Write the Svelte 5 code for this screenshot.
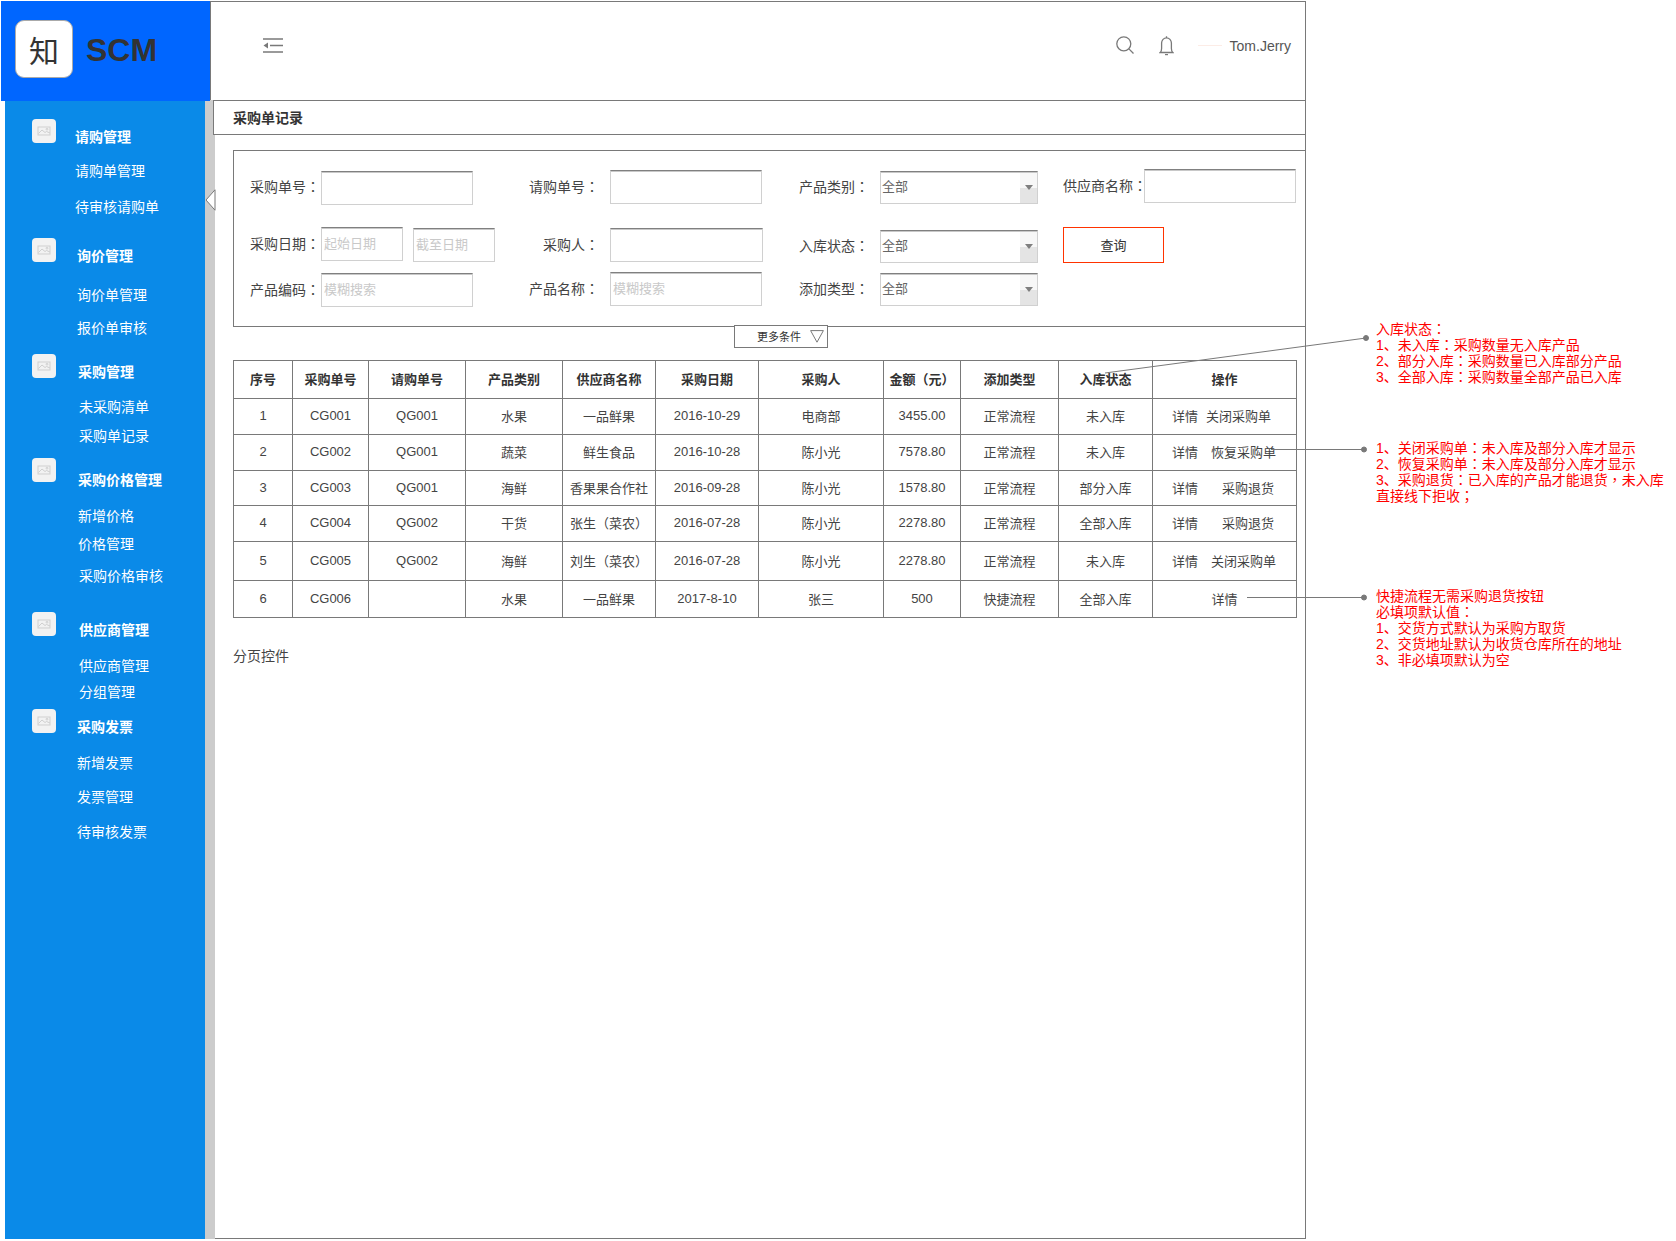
<script lang="ts">
  // sidebar rows: y is the centre of the text in page coords, lift is how far the icon top sits above it
  const menu = [
    { label: '请购管理', y: 137, x: 75, head: true, lift: 18 },
    { label: '请购单管理', y: 171, x: 75 },
    { label: '待审核请购单', y: 207, x: 75 },
    { label: '询价管理', y: 256, x: 77, head: true, lift: 18 },
    { label: '询价单管理', y: 295, x: 77 },
    { label: '报价单审核', y: 328, x: 77 },
    { label: '采购管理', y: 372, x: 78, head: true, lift: 18 },
    { label: '未采购清单', y: 407, x: 79 },
    { label: '采购单记录', y: 436, x: 79 },
    { label: '采购价格管理', y: 480, x: 78, head: true, lift: 22 },
    { label: '新增价格', y: 516, x: 78 },
    { label: '价格管理', y: 544, x: 78 },
    { label: '采购价格审核', y: 576, x: 79 },
    { label: '供应商管理', y: 630, x: 79, head: true, lift: 18 },
    { label: '供应商管理', y: 666, x: 79 },
    { label: '分组管理', y: 692, x: 79 },
    { label: '采购发票', y: 727, x: 77, head: true, lift: 18 },
    { label: '新增发票', y: 763, x: 77 },
    { label: '发票管理', y: 797, x: 77 },
    { label: '待审核发票', y: 832, x: 77 },
  ];
  const rowH = 20;
  const menuRows = menu.map((m, i) => ({
    ...m,
    gap: i === 0 ? m.y - rowH / 2 - 100 : m.y - menu[i - 1].y - rowH,
  }));

  const colWidths = [59, 76, 97, 97, 93, 103, 125, 77, 98, 94, 144];
  const headers = ['序号', '采购单号', '请购单号', '产品类别', '供应商名称', '采购日期', '采购人', '金额（元）', '添加类型', '入库状态', '操作'];
  const rows = [
    { h: 36, c: ['1', 'CG001', 'QG001', '水果', '一品鲜果', '2016-10-29', '电商部', '3455.00', '正常流程', '未入库'], op: '关闭采购单', gap: 8 },
    { h: 36, c: ['2', 'CG002', 'QG001', '蔬菜', '鲜生食品', '2016-10-28', '陈小光', '7578.80', '正常流程', '未入库'], op: '恢复采购单', gap: 13 },
    { h: 35, c: ['3', 'CG003', 'QG001', '海鲜', '香果果合作社', '2016-09-28', '陈小光', '1578.80', '正常流程', '部分入库'], op: '采购退货', gap: 24 },
    { h: 36, c: ['4', 'CG004', 'QG002', '干货', '张生（菜农）', '2016-07-28', '陈小光', '2278.80', '正常流程', '全部入库'], op: '采购退货', gap: 24 },
    { h: 39, c: ['5', 'CG005', 'QG002', '海鲜', '刘生（菜农）', '2016-07-28', '陈小光', '2278.80', '正常流程', '未入库'], op: '关闭采购单', gap: 13 },
    { h: 37, c: ['6', 'CG006', '', '水果', '一品鲜果', '2017-8-10', '张三', '500', '快捷流程', '全部入库'], op: '', gap: 0 },
  ];

  const notes = [
    { y: 321, lines: ['入库状态：', '1、未入库：采购数量无入库产品', '2、部分入库：采购数量已入库部分产品', '3、全部入库：采购数量全部产品已入库'] },
    { y: 440, lines: ['1、关闭采购单：未入库及部分入库才显示', '2、恢复采购单：未入库及部分入库才显示', '3、采购退货：已入库的产品才能退货，未入库', '直接线下拒收；'] },
    { y: 588, lines: ['快捷流程无需采购退货按钮', '必填项默认值：', '1、交货方式默认为采购方取货', '2、交货地址默认为收货仓库所在的地址', '3、非必填项默认为空'] },
  ];

  const punct = /([：，；（）])/;
</script>

{#snippet txt(s)}
  {#each s.split(punct) as part}
    {#if punct.test(part)}<span class="punct">{part}</span>{:else}{part}{/if}
  {/each}
{/snippet}

{#snippet label(s, cls = '')}
  <span class="label {cls}">{@render txt(s)}</span>
{/snippet}

{#snippet dropdown(text)}
  <div class="select">
    <span>{text}</span>
    <div class="select-btn"><i></i></div>
  </div>
{/snippet}

<div class="page">
  <div class="top">
    <div class="brand">
      <div class="logo">知</div>
      <div class="brand-name">SCM</div>
    </div>
    <header class="topbar">
      <svg class="menu-toggle" width="20" height="15" viewBox="0 0 20 15" fill="none" stroke="#797979" stroke-width="1.6">
        <path d="M0 1h20M7 7.5h13M0 14h20" />
        <path d="M5 4.6v5.8L0.5 7.5z" fill="#797979" stroke="none" />
      </svg>
      <div class="spacer"></div>
      <svg width="18" height="18" viewBox="0 0 18 18" fill="none" stroke="#797979" stroke-width="1.3">
        <circle cx="7.8" cy="7.8" r="7" />
        <path d="M12.9 12.9l4.6 4.6" />
      </svg>
      <svg class="bell" width="15" height="21" viewBox="0 0 15 21" fill="none" stroke="#797979" stroke-width="1.3">
        <path d="M7.5 1.2v1.6M1.2 17.5c1-1 1.4-2 1.4-4V8a4.9 5.2 0 0 1 9.8 0v5.5c0 2 .4 3 1.4 4z" />
        <path d="M6 19h3v1.2H6z" fill="#797979" stroke="none" />
      </svg>
      <span class="avatar-line"></span>
      <span class="user">Tom.Jerry</span>
    </header>
  </div>

  <div class="body">
    <nav class="sidebar">
      {#each menuRows as m}
        <div class="menu-row" class:head={m.head} style:margin-top="{m.gap}px" style:padding-left="{m.x - 5}px">
          {#if m.head}
            <div class="menu-icon" style:top="{rowH / 2 - m.lift}px">
              <svg width="14" height="10" viewBox="0 0 14 10" fill="none" stroke="#cfcfcf">
                <rect x="1" y="1" width="12" height="8" />
                <path d="M1.5 7.5l3.5-3.5 3 2.5 1.5-1 3.5 1.5" />
                <circle cx="10" cy="3.2" r=".9" />
              </svg>
            </div>
          {/if}
          {m.label}
        </div>
      {/each}
    </nav>

    <div class="strip">
      <svg class="collapse" width="11" height="22" viewBox="0 0 11 22">
        <path d="M10 .8L1 11l9 10.2z" fill="#fff" stroke="#797979" />
      </svg>
    </div>

    <main class="content">
      <div class="title">采购单记录</div>

      <section class="filter">
        <div class="field dy1">
          {@render label('采购单号：', 'l1')}
          <input class="w152 nudge" />
        </div>
        <div class="field dy1">
          {@render label('请购单号：', 'l2')}
          <input class="w152" />
        </div>
        <div class="field dy1">
          {@render label('产品类别：', 'l2')}
          {@render dropdown('全部')}
        </div>
        <div class="field">
          {@render label('供应商名称：', 'l3')}
          <input class="w152" />
        </div>

        <div class="field">
          {@render label('采购日期：', 'l1')}
          <input class="w82" placeholder="起始日期" />
          <input class="w82 date-to" placeholder="截至日期" />
        </div>
        <div class="field dy1">
          {@render label('采购人：', 'l2')}
          <input class="w153" />
        </div>
        <div class="field dy2">
          {@render label('入库状态：', 'l2')}
          {@render dropdown('全部')}
        </div>
        <div class="field">
          <button class="query">查询</button>
        </div>

        <div class="field dy1">
          {@render label('产品编码：', 'l1')}
          <input class="w152" placeholder="模糊搜索" />
        </div>
        <div class="field">
          {@render label('产品名称：', 'l2')}
          <input class="w152" placeholder="模糊搜索" />
        </div>
        <div class="field">
          {@render label('添加类型：', 'l2')}
          {@render dropdown('全部')}
        </div>
      </section>

      <div class="more">
        <span>更多条件</span>
        <svg width="14" height="13" viewBox="0 0 14 13" fill="none" stroke="#797979">
          <path d="M.6.6h12.8L7 12.2z" />
        </svg>
      </div>

      <table>
        <colgroup>
          {#each colWidths as w}<col style:width="{w}px" />{/each}
        </colgroup>
        <thead>
          <tr>
            {#each headers as h}<th>{@render txt(h)}</th>{/each}
          </tr>
        </thead>
        <tbody>
          {#each rows as r}
            <tr style:height="{r.h}px">
              {#each r.c as v}<td>{@render txt(v)}</td>{/each}
              {#if r.op}
                <td class="ops"><span>详情</span><span style:margin-left="{r.gap}px">{r.op}</span></td>
              {:else}
                <td>详情</td>
              {/if}
            </tr>
          {/each}
        </tbody>
      </table>

      <div class="pager">分页控件</div>
    </main>
  </div>

  <!-- annotations sit on the canvas beside the wireframe -->
  <svg class="links" width="1676" height="1241" fill="#797979" stroke="#797979">
    <path d="M1105 373L1366 338M1271 449.5H1364M1247 597.5H1364" fill="none" />
    <circle cx="1366" cy="338" r="2.5" />
    <circle cx="1364" cy="449.5" r="2.5" />
    <circle cx="1364" cy="597.5" r="2.5" />
  </svg>
  {#each notes as n}
    <div class="note" style:top="{n.y}px">
      {#each n.lines as line}
        <div>{@render txt(line)}</div>
      {/each}
    </div>
  {/each}
</div>

<style>
  :global(body) {
    margin: 0;
    background: #fff;
  }

  .page {
    position: relative;
    width: 1676px;
    height: 1241px;
    padding-top: 1px;
    box-sizing: border-box;
    overflow: hidden;
    font-family: "Liberation Sans", "Noto Sans CJK SC", sans-serif;
    font-size: 14px;
    color: #333;
  }

  .punct {
    font-family: "Noto Sans CJK TC", sans-serif;
    line-height: 0;
  }

  .top {
    display: flex;
    align-items: flex-start;
    width: 1306px;
    height: 99px;
    padding-left: 1px;
    box-sizing: border-box;
  }

  .brand {
    position: relative;
    z-index: 1;
    display: flex;
    align-items: center;
    width: 209px;
    height: 100px;
    padding: 0 0 4px 14px;
    box-sizing: border-box;
    background: #0066ff;
  }

  .logo {
    display: flex;
    align-items: center;
    justify-content: center;
    width: 58px;
    height: 58px;
    box-sizing: border-box;
    background: #fff;
    border: 1px solid #aaa;
    border-radius: 9px;
    font-size: 30px;
    color: #333;
  }

  .brand-name {
    margin: 2px 0 0 13px;
    font-size: 32px;
    font-weight: 700;
    color: #333;
  }

  .topbar {
    flex: 1;
    display: flex;
    align-items: center;
    height: 99px;
    padding: 0 14px 12px 52px;
    box-sizing: border-box;
    border: 1px solid #797979;
    border-bottom: 0;
    background: #fff;
  }

  .spacer {
    flex: 1;
  }

  .bell {
    margin-left: 25px;
  }

  .avatar-line {
    width: 24px;
    height: 1px;
    margin-left: 24px;
    background: #fcece6;
  }

  .user {
    margin: 2px 0 0 8px;
    color: #555;
  }

  .body {
    display: flex;
    width: 1306px;
    height: 1139px;
  }

  .sidebar {
    width: 200px;
    margin-left: 5px;
    background: #0a8ae8;
    color: #fff;
    overflow: hidden;
    flex-shrink: 0;
  }

  .menu-row {
    position: relative;
    height: 20px;
    line-height: 20px;
    white-space: nowrap;
  }

  .menu-row.head {
    font-weight: 700;
  }

  .menu-icon {
    position: absolute;
    left: 27px;
    display: flex;
    align-items: center;
    justify-content: center;
    width: 24px;
    height: 24px;
    background: #f2f2f2;
    border-radius: 4px;
  }

  .strip {
    position: relative;
    width: 10px;
    background: #ccc;
    flex-shrink: 0;
  }

  .collapse {
    position: absolute;
    left: 0;
    top: 89px;
  }

  .content {
    flex: 1;
    min-width: 0;
    padding-left: 18px;
    background: #fff;
    border-right: 1px solid #797979;
    border-bottom: 1px solid #797979;
  }

  .title {
    position: relative;
    height: 33px;
    line-height: 34px;
    margin: 0 -1px 15px -20px;
    padding-left: 19px;
    background: #fff;
    border: 1px solid #797979;
    font-weight: 700;
    font-size: 14px;
  }

  .filter {
    position: relative;
    display: grid;
    grid-template-columns: 280px 270px 264px 1fr;
    grid-template-rows: 58px 45px 34px;
    height: 157px;
    margin-right: -1px;
    padding: 18px 0 0 15px;
    border: 1px solid #797979;
    background: #fff;
  }

  .field {
    display: flex;
    align-items: center;
    height: 34px;
  }

  .dy1 {
    margin-top: 1px;
  }

  .dy2 {
    margin-top: 2px;
  }

  .label {
    flex-shrink: 0;
    margin-top: -3px;
    white-space: nowrap;
    color: #444;
    box-sizing: border-box;
  }

  .l1 {
    width: 72px;
    padding-left: 1px;
  }

  .l2 {
    width: 81px;
    padding-right: 11px;
    text-align: right;
  }

  .l3 {
    width: 81px;
    text-align: right;
  }

  input {
    height: 34px;
    padding: 0 2px 2px;
    box-sizing: border-box;
    border: 1px solid #d0d0d0;
    border-top-color: #808080;
    box-shadow: inset 0 1px 0 #c8c8c8;
    border-radius: 0;
    outline: none;
    font: inherit;
    font-size: 13px;
    background: #fff;
  }

  input::placeholder {
    color: #c9c9c9;
    opacity: 1;
  }

  .nudge {
    margin-top: 2px;
  }

  .w152 {
    width: 152px;
  }

  .w153 {
    width: 153px;
  }

  .w82 {
    width: 82px;
  }

  .date-to {
    margin: 2px 0 0 10px;
  }

  .select {
    position: relative;
    display: flex;
    align-items: center;
    width: 158px;
    height: 33px;
    padding: 0 0 3px 1px;
    box-sizing: border-box;
    border: 1px solid #d0d0d0;
    border-top-color: #808080;
    box-shadow: inset 0 1px 0 #c8c8c8;
    font-size: 13px;
    color: #666;
  }

  .select-btn {
    position: absolute;
    top: 1px;
    right: 0;
    bottom: 0;
    width: 17px;
    display: flex;
    align-items: center;
    justify-content: center;
    background: linear-gradient(#f7f7f7 50%, #e4e4e4 50%);
  }

  .select-btn i {
    width: 0;
    height: 0;
    border: 4px solid transparent;
    border-top: 5px solid #7f7f7f;
    border-bottom: 0;
  }

  .query {
    width: 101px;
    height: 36px;
    margin-top: 2px;
    padding: 0 0 2px;
    background: #fff;
    border: 1px solid #ff3300;
    font: inherit;
    font-size: 13px;
    color: #333;
  }

  .more {
    position: relative;
    display: flex;
    align-items: center;
    justify-content: flex-end;
    gap: 9px;
    width: 94px;
    height: 23px;
    margin: -2px 0 0 501px;
    padding: 0 3px 1px 0;
    box-sizing: border-box;
    background: #fff;
    border: 1px solid #797979;
    font-size: 11px;
  }

  table {
    width: 1063px;
    margin-top: 12px;
    table-layout: fixed;
    border-collapse: collapse;
    font-size: 13px;
  }

  th,
  td {
    padding: 0 0 2px;
    border: 1px solid #797979;
    text-align: center;
    white-space: nowrap;
  }

  thead tr {
    height: 38px;
  }

  th {
    font-weight: 700;
  }

  td {
    color: #444;
  }

  td.ops {
    padding-left: 19px;
    text-align: left;
  }

  .pager {
    height: 20px;
    line-height: 20px;
    margin-top: 28px;
    font-size: 14px;
    color: #444;
  }

  .links {
    position: absolute;
    left: 0;
    top: 0;
    pointer-events: none;
  }

  .note {
    position: absolute;
    left: 1376px;
    font-size: 14px;
    line-height: 16px;
    color: #ff0000;
    white-space: nowrap;
  }
</style>
